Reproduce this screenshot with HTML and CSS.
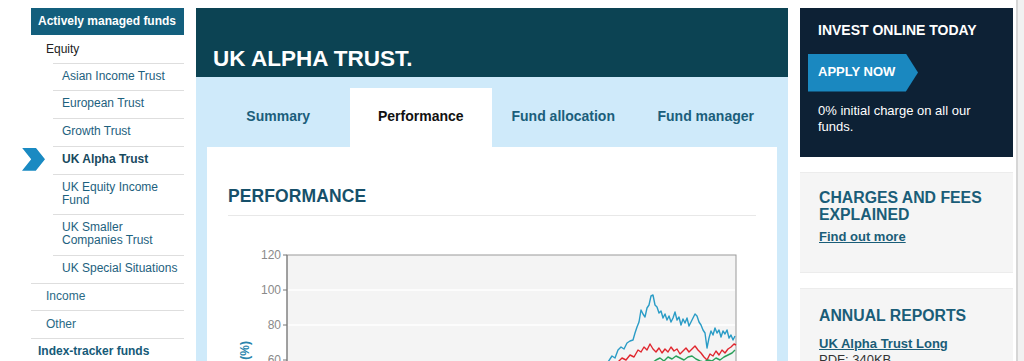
FILE: index.html
```html
<!DOCTYPE html>
<html lang="en">
<head>
<meta charset="utf-8">
<title>UK Alpha Trust – Performance</title>
<link rel="stylesheet" href="styles.css">
</head>
<body>
<div class="page">
  <nav class="sidenav">
    <div class="nav-head">Actively managed funds</div>
    <div class="nav-l2 first">Equity</div>
    <ul class="nav-sub">
      <li>Asian Income Trust</li>
      <li>European Trust</li>
      <li>Growth Trust</li>
      <li class="current"><span class="chev"></span>UK Alpha Trust</li>
      <li>UK Equity Income<br>Fund</li>
      <li>UK Smaller<br>Companies Trust</li>
      <li>UK Special Situations</li>
    </ul>
    <div class="nav-l2">Income</div>
    <div class="nav-l2">Other</div>
    <div class="nav-l1">Index-tracker funds</div>
  </nav>

  <main class="main">
    <header class="fund-head">UK ALPHA TRUST.</header>
    <div class="tabs">
      <div class="tab">Summary</div>
      <div class="tab active">Performance</div>
      <div class="tab">Fund allocation</div>
      <div class="tab">Fund manager</div>
    </div>
    <section class="panel">
      <h2 class="panel-title">PERFORMANCE</h2>
      <svg class="chart" width="528" height="150" viewBox="228 216 528 150">
        <rect x="287" y="255" width="449" height="130" fill="#f4f4f4" stroke="#9a9a9a" stroke-width="1"/>
        <line x1="288" y1="290" x2="735" y2="290" stroke="#ffffff" stroke-width="1.5"/>
        <line x1="288" y1="325" x2="735" y2="325" stroke="#ffffff" stroke-width="1.5"/>
        <line x1="287" y1="255" x2="287" y2="370" stroke="#777" stroke-width="1"/>
        <g stroke="#777" stroke-width="1">
          <line x1="283" y1="255" x2="287" y2="255"/>
          <line x1="283" y1="290" x2="287" y2="290"/>
          <line x1="283" y1="325" x2="287" y2="325"/>
          <line x1="283" y1="360" x2="287" y2="360"/>
        </g>
        <g class="ylab" text-anchor="end">
          <text x="281" y="259">120</text>
          <text x="281" y="294">100</text>
          <text x="281" y="329">80</text>
          <text x="281" y="364">60</text>
        </g>
        <text class="ytitle" x="0" y="0" text-anchor="end" transform="translate(249,341) rotate(-90)">Performance (%)</text>
        <polyline fill="none" stroke="#2a9cc6" stroke-width="1.4" stroke-linejoin="round" points="608,362 612,356 615,358 618,350 621,347 624,349 627,343 630,341 633,340 635,333 637,327 639,322 641,310 643,314 645,317 647,308 649,305 651,296 653,295 655,305 657,307 659,313 661,311 663,318 665,314 667,320 669,316 671,322 673,318 675,312 677,320 679,317 681,325 683,319 685,323 687,318 689,326 691,322 693,318 695,314 697,316 699,322 701,325 703,330 705,333 707,348 709,338 711,331 713,335 715,328 717,333 719,330 721,337 723,331 725,334 727,330 729,338 731,335 733,340 735,336"/>
        <polyline fill="none" stroke="#e0262e" stroke-width="1.4" stroke-linejoin="round" points="618,362 622,358 626,360 630,355 634,357 638,350 641,352 644,347 647,350 650,344 653,349 656,352 659,348 662,353 665,349 668,352 671,347 674,351 677,349 680,354 683,351 686,348 689,352 692,349 695,346 698,350 701,353 704,357 707,360 710,354 713,356 716,351 719,355 722,350 725,353 728,349 731,347 734,344 736,345"/>
        <polyline fill="none" stroke="#2aa05a" stroke-width="1.4" stroke-linejoin="round" points="652,363 656,360 660,358 664,361 668,357 672,359 676,356 680,358 684,360 688,357 692,356 696,359 700,361 704,362 708,360 712,361 716,358 720,360 724,357 728,355 732,353 735,350"/>
      </svg>
    </section>
  </main>

  <aside class="side">
    <div class="promo">
      <div class="promo-title">INVEST ONLINE TODAY</div>
      <a class="apply">APPLY NOW</a>
      <p class="promo-text">0% initial charge on all our funds.</p>
    </div>
    <div class="box">
      <h3 class="box-title">CHARGES AND FEES EXPLAINED</h3>
      <a class="box-link">Find out more</a>
    </div>
    <div class="box box-reports">
      <h3 class="box-title">ANNUAL REPORTS</h3>
      <div class="report">
        <a class="box-link">UK Alpha Trust Long</a>
        <div class="meta">PDF: 340KB</div>
      </div>
    </div>
  </aside>

  <div class="edge"></div>
</div>
</body>
</html>
```

FILE: styles.css
```css
html, body {
  margin: 0;
  padding: 0;
  height: 361px;
  overflow: hidden;
  background: #ffffff;
}

body {
  font-family: "Liberation Sans", Arial, sans-serif;
  color: #222;
}

.page {
  display: flex;
  align-items: flex-start;
  padding-left: 31px;
  height: 361px;
}

/* ---------- left navigation ---------- */
.sidenav {
  width: 153px;
  margin-top: 8px;
  flex: none;
  font-size: 12px;
  line-height: 13px;
}

.nav-head {
  background: #135f7d;
  color: #fff;
  font-weight: bold;
  height: 27px;
  line-height: 27px;
  padding-left: 7px;
  font-size: 12px;
}

.nav-l2 {
  padding: 6.5px 0 7px 15px;
  border-top: 1px solid #dedede;
  color: #2a6a86;
}

.nav-l2.first {
  border-top: 0;
  padding-top: 7.5px;
  color: #222;
}

.nav-l1 {
  padding: 6.5px 0 7px 7px;
  border-top: 1px solid #dedede;
  color: #165a78;
  font-weight: bold;
}

.nav-sub {
  list-style: none;
  margin: 0;
  padding: 0;
}

.nav-sub li {
  margin-left: 22px;
  padding: 6px 0 7.75px 9px;
  border-top: 1px solid #dedede;
  color: #1d617e;
  position: relative;
}

.nav-sub li.current {
  font-weight: bold;
  color: #17495e;
}

.chev {
  position: absolute;
  left: -31px;
  top: 1px;
  width: 23px;
  height: 23px;
  background: #1a8ac2;
  clip-path: polygon(0 0, 60% 0, 100% 50%, 60% 100%, 0 100%, 40% 50%);
}

/* ---------- main ---------- */
.main {
  width: 592px;
  flex: none;
  margin: 8px 0 0 12px;
  background: #cfeafa;
  height: 400px;
}

.fund-head {
  background: #0c4353;
  color: #fff;
  font-weight: bold;
  font-size: 22.5px;
  line-height: 26px;
  height: 69px;
  box-sizing: border-box;
  padding: 38px 0 0 17px;
}

.tabs {
  display: flex;
  margin: 11px 11px 0;
  height: 59px;
}

.tab {
  flex: 1;
  display: flex;
  align-items: center;
  justify-content: center;
  box-sizing: border-box;
  padding-bottom: 3px;
  font-weight: bold;
  font-size: 14px;
  color: #1b5e7b;
}

.tab.active {
  background: #fff;
  color: #111;
}

.panel {
  background: #fff;
  margin: 0 11px;
  padding: 39px 21px 0;
  height: 300px;
  overflow: hidden;
}

.panel-title {
  margin: 0;
  font-size: 17.5px;
  line-height: 20px;
  font-weight: bold;
  color: #16506a;
  padding-bottom: 9px;
  border-bottom: 1px solid #e8e8e8;
  letter-spacing: 0.1px;
}

.chart {
  display: block;
}

.ylab text {
  font-family: "Liberation Sans", Arial, sans-serif;
  font-size: 12px;
  fill: #8a8a8a;
}

.ytitle {
  font-family: "Liberation Sans", Arial, sans-serif;
  font-size: 12px;
  font-weight: bold;
  fill: #2a84ad;
}

/* ---------- right column ---------- */
.side {
  width: 213px;
  flex: none;
  margin: 8px 0 0 12px;
}

.promo {
  background: #0d2135;
  color: #fff;
  height: 149px;
  box-sizing: border-box;
  padding: 14px 18px 0;
}

.promo-title {
  font-weight: bold;
  font-size: 14px;
  line-height: 17px;
}

.apply {
  display: block;
  margin: 14.5px 0 0 -10px;
  width: 110px;
  height: 38px;
  box-sizing: border-box;
  padding-left: 10px;
  line-height: 36px;
  background: #1a88c0;
  color: #fff;
  font-weight: bold;
  font-size: 13px;
  clip-path: polygon(0 0, 89% 0, 100% 50%, 89% 100%, 0 100%);
}

.promo-text {
  margin: 11px 0 0;
  font-size: 13px;
  line-height: 16px;
}

.box {
  margin-top: 15px;
  background: #f5f5f5;
  border-top: 1px solid #ececec;
  border-bottom: 1px solid #ececec;
  padding: 16px 19px 27px;
}

.box-reports {
  padding-top: 18px;
}

.box-title {
  margin: 0 0 6px;
  font-size: 15.8px;
  line-height: 17px;
  font-weight: bold;
  color: #1a5d78;
}

.box-link {
  display: block;
  font-weight: bold;
  font-size: 13px;
  line-height: 16px;
  color: #1a5d78;
  text-decoration: underline;
}

.report {
  margin-top: 12px;
}

.meta {
  font-size: 13px;
  line-height: 16px;
  color: #333;
}

/* ---------- page edge ---------- */
.edge {
  flex: 1;
  align-self: stretch;
  margin-left: 3px;
  border-left: 2px solid #d6d6d6;
  background: #f1f1f1;
}
```
